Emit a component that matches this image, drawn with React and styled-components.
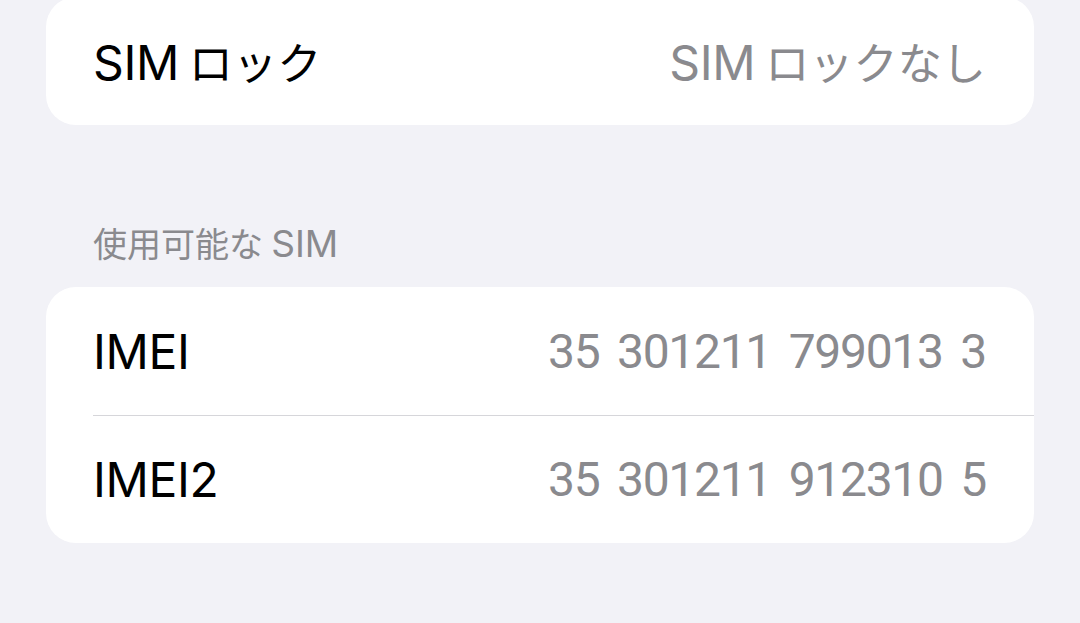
import React from 'react';
import styled, { createGlobalStyle } from 'styled-components';

const GlobalStyle = createGlobalStyle`
  html, body {
    margin: 0;
    padding: 0;
    background: #f2f2f7;
    overflow: hidden;
  }
  body {
    font-family: "Inter", "Noto Sans CJK JP", sans-serif;
    -webkit-font-smoothing: antialiased;
  }
`;

const Page = styled.div`
  width: 1080px;
  height: 623px;
  box-sizing: border-box;
  padding: 0 46px;
  background: #f2f2f7;
  overflow: hidden;
`;

const Card = styled.div`
  background: #ffffff;
  border-radius: 30px;
  overflow: hidden;
  margin-top: ${(p) => p.$offset || 0}px;
`;

const Row = styled.div`
  position: relative;
  height: 128px;
  display: flex;
  align-items: center;
  justify-content: space-between;
  padding: 0 48px 0 47px;

  ${(p) =>
    p.$divider &&
    `
    &::before {
      content: "";
      position: absolute;
      top: 0;
      left: 47px;
      right: 0;
      height: 1px;
      background: #d6d6da;
    }
  `}
`;

const Label = styled.span`
  font-size: 48px;
  color: #000000;
  letter-spacing: -0.4px;
  white-space: nowrap;
`;

const Value = styled.span`
  font-size: 48px;
  color: #8a8a8e;
  letter-spacing: -0.4px;
  white-space: nowrap;
`;

// IMEI digits: tabular, a little condensed
const Digits = styled.span`
  font-family: "Roboto", "Inter", sans-serif;
  font-size: 48px;
  color: #8a8a8e;
  letter-spacing: -1.3px;
  word-spacing: 7px;
  white-space: nowrap;
`;

// Japanese text sits slightly smaller than the latin run next to it
const Jp = styled.span`
  font-family: "Noto Sans CJK JP", sans-serif;
  font-size: 0.92em;
  letter-spacing: 0;
  margin-left: ${(p) => p.$ml || 0}px;
  margin-right: ${(p) => p.$mr || 0}px;
`;

const SectionHeader = styled.div`
  padding: 96px 0 21px 47px;
  line-height: 44px;
  font-size: 37px;
  color: #8a8a8e;
`;

const rows = [
  { label: 'IMEI', value: '35 301211 799013 3' },
  { label: 'IMEI2', value: '35 301211 912310 5' },
];

export default function App() {
  return (
    <Page>
      <GlobalStyle />
      <Card $offset={-3}>
        <Row>
          <Label>
            SIM<Jp $ml={10}>ロック</Jp>
          </Label>
          <Value>
            SIM<Jp $ml={10}>ロックなし</Jp>
          </Value>
        </Row>
      </Card>
      <SectionHeader>
        <Jp $mr={8}>使用可能な</Jp>SIM
      </SectionHeader>
      <Card>
        {rows.map((r, i) => (
          <Row key={r.label} $divider={i > 0}>
            <Label>{r.label}</Label>
            <Digits>{r.value}</Digits>
          </Row>
        ))}
      </Card>
    </Page>
  );
}
